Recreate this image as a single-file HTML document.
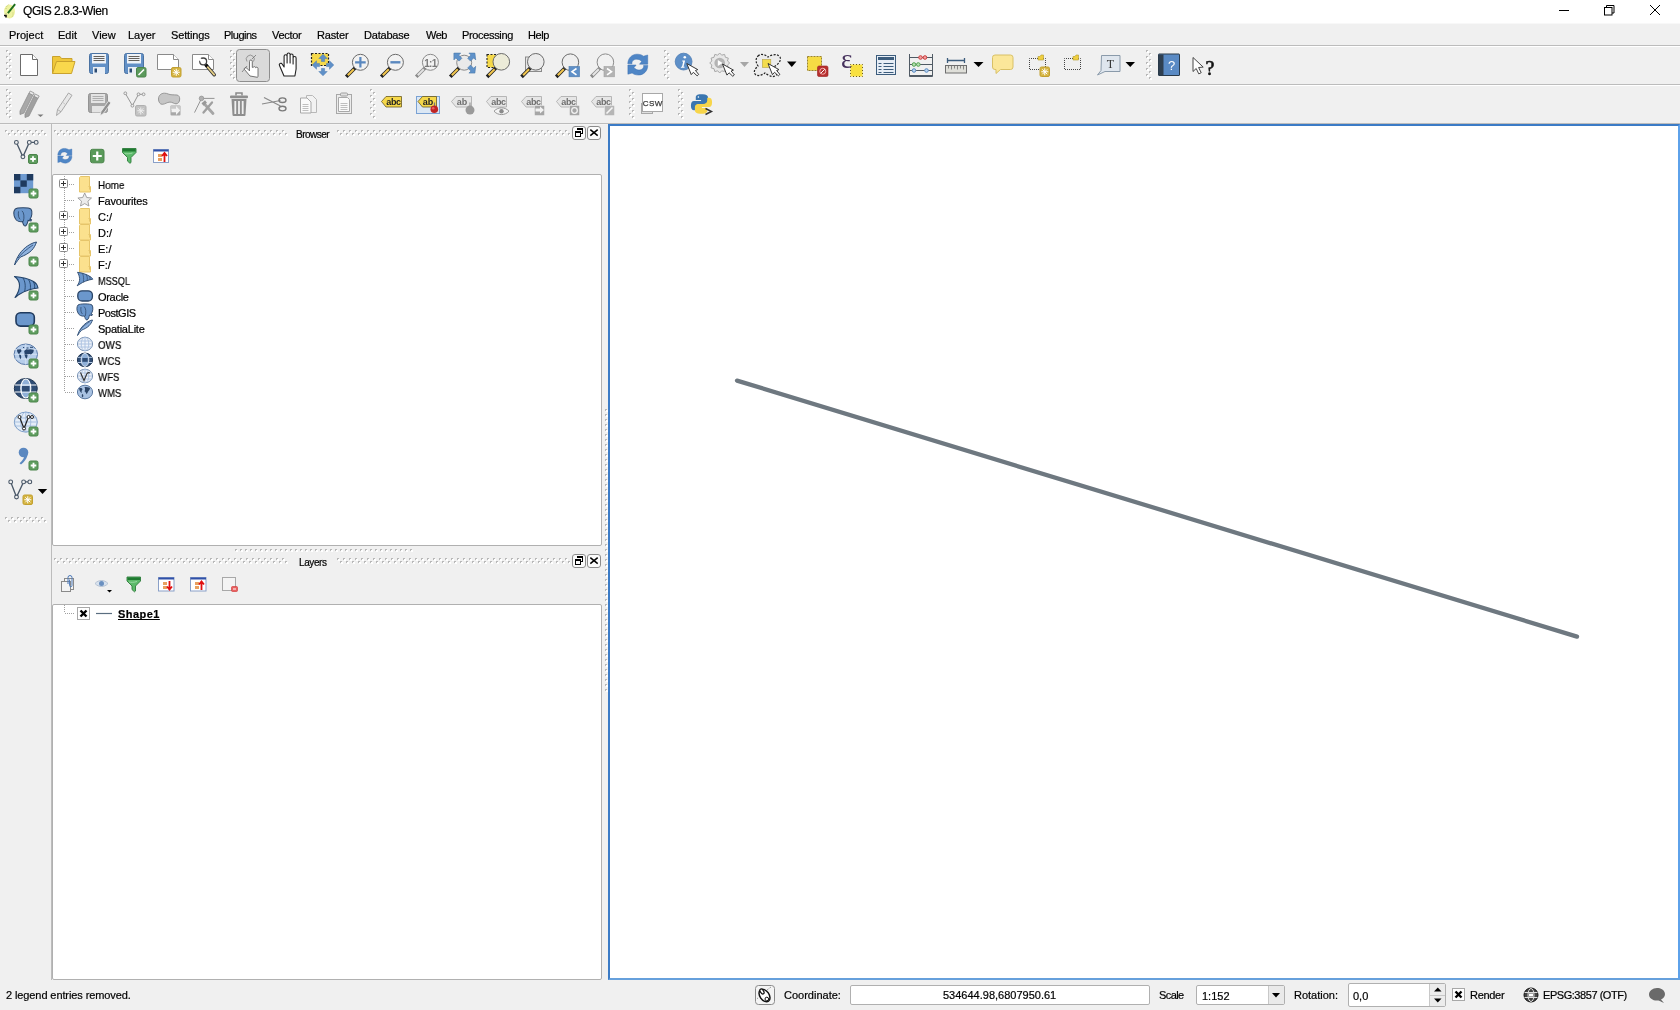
<!DOCTYPE html>
<html><head><meta charset="utf-8">
<style>
*{margin:0;padding:0;box-sizing:border-box}
html,body{width:1680px;height:1010px;overflow:hidden;background:#f0f0f0;font-family:"Liberation Sans",sans-serif;font-size:11px;color:#000}
.a{position:absolute}
.t{position:absolute;white-space:nowrap;line-height:13px;will-change:transform;-webkit-text-stroke:0.2px #000}
svg.a{overflow:visible}
#title{left:0;top:0;width:1680px;height:24px;background:#fff;border-bottom:1px solid #f8f8f8}
.hl{position:absolute;left:0;width:1680px;height:2px;border-top:1px solid #bcbcbc;background:#fff}
.frame{position:absolute;background:#fff;border:1px solid #b0b0b0;border-radius:2px}
.dbtn{position:absolute;width:14px;height:14px;border:1px solid #8a8a8a;border-radius:3px;background:#f4f4f4}
</style></head><body>
<svg width="0" height="0" style="position:absolute"><defs><pattern id="gp" width="6" height="6" patternUnits="userSpaceOnUse"><rect x="1" y="1" width="2" height="2" fill="#fff"/><rect x="0" y="0" width="2" height="1" fill="#b8b8b8"/><rect x="0" y="1" width="1" height="1" fill="#b8b8b8"/><rect x="4" y="4" width="2" height="2" fill="#fff"/><rect x="3" y="3" width="2" height="1" fill="#b8b8b8"/><rect x="3" y="4" width="1" height="1" fill="#b8b8b8"/></pattern><pattern id="gp5" width="5" height="5" patternUnits="userSpaceOnUse"><rect x="1" y="1" width="2" height="2" fill="#fff"/><rect x="0" y="0" width="2" height="1" fill="#b8b8b8"/><rect x="0" y="1" width="1" height="1" fill="#b8b8b8"/></pattern></defs></svg>
<!-- title bar -->
<div id="title" class="a"></div>
<div class="t" style="left:23px;top:4px;font-size:12px;line-height:15px;letter-spacing:-0.45px">QGIS 2.8.3-Wien</div>
<svg class="a" style="left:0;top:0" width="1680" height="23">
<ellipse cx="9.5" cy="11.5" rx="5.5" ry="7" fill="#eef2a0"/>
<path d="M6 9c0-2 1.5-4 3-4.5M6 13c0 1 .5 2 1 2.5M13 12.5v2.5l-1 2" stroke="#b8c070" stroke-width="0.8" fill="none" stroke-dasharray="1 1"/>
<path d="M8.5 12.3L14.5 5" stroke="#1d6e1d" stroke-width="2" stroke-linecap="square"/>
<path d="M4 15.5h2v2" fill="none" stroke="#111" stroke-width="1.6"/>
<path d="M1559 10.5h10" stroke="#000" stroke-width="1"/>
<rect x="1604.5" y="7.5" width="7.5" height="7.5" fill="none" stroke="#000" stroke-width="1"/>
<path d="M1606.5 7.5v-2h7.5v7.5h-2" fill="none" stroke="#000" stroke-width="1"/>
<path d="M1650 5l10 10M1660 5l-10 10" stroke="#000" stroke-width="1"/>
</svg>
<!-- menu -->
<div class="t" style="left:9px;top:29px">Project</div>
<div class="t" style="left:58px;top:29px">Edit</div>
<div class="t" style="left:92px;top:29px">View</div>
<div class="t" style="left:128px;top:29px">Layer</div>
<div class="t" style="left:171px;top:29px;letter-spacing:-0.15px">Settings</div>
<div class="t" style="left:224px;top:29px;letter-spacing:-0.5px">Plugins</div>
<div class="t" style="left:272px;top:29px;letter-spacing:-0.28px">Vector</div>
<div class="t" style="left:317px;top:29px;letter-spacing:-0.17px">Raster</div>
<div class="t" style="left:364px;top:29px;letter-spacing:-0.2px">Database</div>
<div class="t" style="left:426px;top:29px;letter-spacing:-0.5px">Web</div>
<div class="t" style="left:462px;top:29px;letter-spacing:-0.35px">Processing</div>
<div class="t" style="left:528px;top:29px;letter-spacing:-0.42px">Help</div>
<div class="hl" style="top:45px"></div>
<div class="hl" style="top:84px"></div>
<div class="hl" style="top:123px;background:#f4f4f4"></div>
<!-- grips -->
<svg class="a" style="left:6px;top:50px" width="6" height="30"><rect width="6" height="30" fill="url(#gp)"/></svg>
<svg class="a" style="left:6px;top:89px" width="6" height="30"><rect width="6" height="30" fill="url(#gp)"/></svg>
<!-- TOOLBAR ROW 1 -->
<svg class="a" style="left:0;top:0" width="1680" height="125">
<defs>
<g id="plusb"><rect x="0.5" y="0.5" width="9" height="9" rx="1.5" fill="#5f9d5f" stroke="#4b844b"/><path d="M5 2.2v5.6M2.2 5h5.6" stroke="#fff" stroke-width="1.8"/></g>
<g id="starb"><rect x="0.5" y="0.5" width="9.5" height="9.5" rx="1.5" fill="#d5b440" stroke="#c2a030"/><path d="M5.25 1.8v7M1.8 5.25h7M2.8 2.8l5 5M7.8 2.8l-5 5" stroke="#fff" stroke-width="1"/></g>
<g id="cursor"><path d="M0 0L4.45 11.1L6.55 8.8L10.35 12.3L11.85 10.9L8.65 7L10.95 6.1Z" fill="#fff" stroke="#222" stroke-width="0.9" stroke-linejoin="round"/></g>
</defs>
<!-- new -->
<path d="M20.5 54.5h12l5 5v16h-17z" fill="#fff" stroke="#6b6b6b"/>
<path d="M32.5 54.5v5h5" fill="#fff" stroke="#6b6b6b"/>
<!-- open -->
<path d="M52.5 73.5V56.5H60l1.5 2H72v3" fill="#efc73a" stroke="#c9a22e"/>
<path d="M52.5 73.5L56.5 61.5H75L71.5 73.5z" fill="#f9d84c" stroke="#c9a22e"/>
<!-- save -->
<rect x="89.5" y="53.5" width="19" height="20" rx="2" fill="#6290c6" stroke="#4a72a2"/>
<rect x="92" y="54" width="14" height="9.5" fill="#eef2f7"/>
<path d="M93.5 56.5h11M93.5 58.5h11M93.5 60.5h11" stroke="#55504a" stroke-width="0.9"/>
<rect x="93" y="67" width="12" height="7" fill="#e9eef4"/>
<rect x="94.5" y="68.5" width="2.5" height="4" fill="#2d4b72"/>
<!-- save as -->
<rect x="124.5" y="53.5" width="19" height="20" rx="2" fill="#6290c6" stroke="#4a72a2"/>
<rect x="127" y="54" width="14" height="9.5" fill="#eef2f7"/>
<path d="M128.5 56.5h11M128.5 58.5h11M128.5 60.5h11" stroke="#55504a" stroke-width="0.9"/>
<rect x="128" y="67" width="12" height="7" fill="#e9eef4"/>
<rect x="129.5" y="68.5" width="2.5" height="4" fill="#2d4b72"/>
<rect x="136.5" y="67.5" width="9.5" height="9.5" rx="1.5" fill="#5c9a5c" stroke="#4a844a"/>
<path d="M138.5 75l5.5-5.5" stroke="#fff" stroke-width="1.6"/>
<!-- new composer -->
<path d="M157.5 54.5h16l5 5v10h-21z" fill="#fff" stroke="#8a8a8a"/>
<path d="M173.5 54.5v5h5" fill="#fff" stroke="#8a8a8a"/>
<use href="#starb" x="171" y="67"/>
<!-- composer manager -->
<path d="M192.5 54.5h16l5 5v10h-21z" fill="#fff" stroke="#8a8a8a"/>
<path d="M208.5 54.5v5h5" fill="#fff" stroke="#8a8a8a"/>
<path d="M206.3 65.3l8 9.5" stroke="#333" stroke-width="3.4" stroke-linecap="round"/>
<path d="M207.6 67l6.6 7.6" stroke="#e6cf85" stroke-width="1.8" stroke-linecap="round"/>
<path d="M205.5 64.5l1.8 2" stroke="#111" stroke-width="3"/>
<circle cx="203.2" cy="61.4" r="3.4" fill="#fff" stroke="#444" stroke-width="1.3"/>
<path d="M199.2 58.8l3.6 2.8" stroke="#fff" stroke-width="2.6"/>
<circle cx="203.2" cy="61.4" r="1" fill="#fff"/>
<!-- grip -->
<g transform="translate(230,50)"><rect width="6" height="30" fill="url(#gp)"/></g>
<!-- active touch button -->
<rect x="236.5" y="49.5" width="33" height="32" rx="3" fill="#dadada" stroke="#8e8e8e"/>
<path d="M250 76l-5.5-6.5a1.3 1.3 0 0 1 2-1.6l3 3v-9.5a1.4 1.4 0 0 1 2.8 0v6l1-0.1a1.3 1.3 0 0 1 2.4 0.4a1.3 1.3 0 0 1 2.3 0.6v7.7c0 0.5-0.2 1-0.5 1.3z" fill="#fff" stroke="#555" stroke-width="0.8"/>
<path d="M247 61.5a4 4 0 1 1 6.5 0" fill="none" stroke="#666" stroke-width="0.6"/>
<path d="M256 55l-4 4M247 66l-5 6" stroke="#666" stroke-width="0.7"/>
<!-- pan hand -->
<path d="M284 76l-4.5-10.5a1.5 1.5 0 0 1 2.6-1.5l2 3V56.2a1.5 1.5 0 0 1 3 0V63V54.5a1.5 1.5 0 0 1 3 0V63V55.5a1.5 1.5 0 0 1 3 0V64V58a1.5 1.5 0 0 1 3 0v11l-1.2 7z" fill="#fff" stroke="#222" stroke-width="1.1" stroke-linejoin="round"/>
<!-- pan to selection -->
<rect x="311.5" y="53.5" width="17" height="12" fill="#f5d94a" stroke="#222" stroke-width="1.2" stroke-dasharray="2 1.5"/>
<g fill="#5f90c8" stroke="#4a7ab0" stroke-width="0.5">
<path d="M323 54.2l-4.2 4.3h2.6v3h3.2v-3h2.6z"/>
<path d="M323 75.8l-4.2-4.3h2.6v-3h3.2v3h2.6z"/>
<path d="M312.2 65l4.3-4.2v2.6h3v3.2h-3v2.6z"/>
<path d="M333.8 65l-4.3-4.2v2.6h-3v3.2h3v2.6z"/>
</g>
<!-- zoom in -->
<g>
<path d="M354.5 68.5l-7 7" stroke="#222" stroke-width="3.6" stroke-linecap="square"/>
<path d="M353.8 69.2l-6 6" stroke="#f2c64e" stroke-width="2"/>
<circle cx="360.4" cy="62.3" r="8" fill="#f2f2f2" stroke="#6a6a6a" stroke-width="1"/>
<path d="M360.4 57v10.6M355.1 62.3h10.6" stroke="#5a88bf" stroke-width="2.2"/>
</g>
<!-- zoom out -->
<path d="M389.5 68.5l-7 7" stroke="#222" stroke-width="3.6" stroke-linecap="square"/>
<path d="M388.8 69.2l-6 6" stroke="#f2c64e" stroke-width="2"/>
<circle cx="395.4" cy="62.3" r="8" fill="#f2f2f2" stroke="#6a6a6a" stroke-width="1"/>
<path d="M390.4 62.3h10" stroke="#5a88bf" stroke-width="2.4"/>
<!-- zoom 1:1 -->
<path d="M424.5 68.5l-7 7" stroke="#8a8a8a" stroke-width="3.6" stroke-linecap="square"/>
<path d="M423.8 69.2l-6 6" stroke="#e2e2e2" stroke-width="2"/>
<circle cx="430.4" cy="62.3" r="8" fill="#f2f2f2" stroke="#8a8a8a" stroke-width="1"/>
<text x="430.4" y="66.5" font-family="Liberation Sans" font-weight="bold" font-size="10" fill="#7a7a7a" text-anchor="middle" letter-spacing="-0.8">1:1</text>
<!-- zoom full -->
<path d="M458.5 68.5l-7 7" stroke="#222" stroke-width="3.6" stroke-linecap="square"/>
<path d="M457.8 69.2l-6 6" stroke="#f2c64e" stroke-width="2"/>
<circle cx="464.2" cy="62.7" r="7.5" fill="#eaeaea" stroke="#8a8a8a" stroke-width="1"/>
<path d="M454.7 53.1h6l-2 2l3.2 3.2l-2.8 2.8l-3.2-3.2l-2 2v-6.8z" fill="#5f92ca" stroke="#4a78aa" stroke-width="0.6"/>
<path d="M474.9 53.1h-6l2 2l-3.2 3.2l2.8 2.8l3.2-3.2l2 2z" fill="#5f92ca" stroke="#4a78aa" stroke-width="0.6"/>
<path d="M474.9 73.1h-6l2-2l-3.2-3.2l2.8-2.8l3.2 3.2l2-2z" fill="#5f92ca" stroke="#4a78aa" stroke-width="0.6"/>
<!-- zoom to selection -->
<rect x="487" y="54.5" width="9" height="13" fill="#f5d94a" stroke="#222" stroke-width="1.1" stroke-dasharray="2 1.5"/>
<path d="M495.3 68.6l-7 7" stroke="#222" stroke-width="3.6" stroke-linecap="square"/>
<path d="M494.6 69.3l-6 6" stroke="#f2c64e" stroke-width="2"/>
<circle cx="501.3" cy="61.8" r="8.3" fill="#ecebd8" stroke="#6a6a6a" stroke-width="1"/>
<!-- zoom to layer -->
<rect x="525.5" y="57" width="16" height="14.5" fill="#e6e6e6" stroke="#8a8a8a"/>
<path d="M529.8 68.6l-7 7" stroke="#222" stroke-width="3.6" stroke-linecap="square"/>
<path d="M529.1 69.3l-6 6" stroke="#f2c64e" stroke-width="2"/>
<circle cx="535.8" cy="61.8" r="8.3" fill="#ebebeb" stroke="#6a6a6a" stroke-width="1"/>
<!-- zoom last -->
<path d="M564.5 68.6l-7 7" stroke="#222" stroke-width="3.6" stroke-linecap="square"/>
<path d="M563.8 69.3l-6 6" stroke="#f2c64e" stroke-width="2"/>
<circle cx="570.4" cy="62.2" r="8.3" fill="#efefef" stroke="#6a6a6a" stroke-width="1"/>
<rect x="569" y="66.5" width="10.5" height="10.3" fill="#5f90c8" stroke="#4a78aa" stroke-width="0.6"/>
<path d="M576.5 68.5l-4.5 3.2l4.5 3.2" fill="none" stroke="#fff" stroke-width="1.6"/>
<!-- zoom next -->
<path d="M599.5 68.6l-7 7" stroke="#8a8a8a" stroke-width="3.6" stroke-linecap="square"/>
<path d="M598.8 69.3l-6 6" stroke="#e6e6e6" stroke-width="2"/>
<circle cx="605.4" cy="62.2" r="8.3" fill="#f1f1f1" stroke="#8a8a8a" stroke-width="1"/>
<rect x="604" y="66.5" width="10.5" height="10.3" fill="#b3b3b3" stroke="#a0a0a0" stroke-width="0.6"/>
<path d="M607 68.5l4.5 3.2l-4.5 3.2" fill="none" stroke="#fff" stroke-width="1.6"/>
<!-- refresh -->
<g id="refr"><path id="rfa" d="M627.8 63.8C628 58 632 54.2 637 54.2C640 54.2 642 55 643.5 56.2L647.7 55V64.2H639.5L641.6 61.6C640.4 60 638.8 59.2 636.8 59.2C633.6 59.2 631.5 61.2 632 63.8Z" fill="#4f86c6" stroke="#3a6eb0" stroke-width="0.5"/>
<use href="#rfa" transform="rotate(180 637.8 64.6)"/></g>
<!-- grip -->
<g transform="translate(664,50)"><rect width="6" height="30" fill="url(#gp)"/></g>
<!-- identify -->
<circle cx="683.6" cy="61.6" r="8.4" fill="#5d8fc8" stroke="#4a7ab2" stroke-width="0.8"/>
<circle cx="684.8" cy="57.3" r="1.3" fill="#fff"/>
<path d="M682.3 60.5h2.8l-1.6 6.3h1.2l-0.3 1h-3.6l0.3-1h0.9l1.2-5.3h-1.1z" fill="#fff"/>
<use href="#cursor" x="686.8" y="63.5"/>
<!-- actions gear -->
<g fill="none" stroke="#a8a8a8" stroke-width="1">
<path d="M719.7 53l2 2.2l2.9-0.8l0.8 2.9l2.9 0.8l-0.8 2.9l2.2 2l-2.2 2l0.8 2.9l-2.9 0.8l-0.8 2.9l-2.9-0.8l-2 2.2l-2-2.2l-2.9 0.8l-0.8-2.9l-2.9-0.8l0.8-2.9l-2.2-2l2.2-2l-0.8-2.9l2.9-0.8l0.8-2.9l2.9 0.8z" fill="#e8e8e8"/>
</g>
<circle cx="719.7" cy="63" r="5.3" fill="#b4b4b4"/>
<path d="M717.8 60v6l4.8-3z" fill="#fff"/>
<use href="#cursor" x="722.5" y="64"/>
<path d="M740 62h9l-4.5 5z" fill="#a6a6a6"/>
<!-- select -->
<path d="M758 56c3-3 8-1 10 1c3-2 9-4 12 0c2 4-3 8-6 10c3 3 5 7 1 9c-4 2-8-2-10-3c-3 2-8 4-10 1c-2-3 1-6 3-8c-2-3-3-7 0-10z" fill="#ececec" stroke="#222" stroke-width="1.2" stroke-dasharray="2 1.4"/>
<rect x="762.3" y="59.5" width="8.5" height="8" fill="#f3dc4c" stroke="#b4a24a" stroke-width="0.6"/>
<use href="#cursor" x="768" y="63.5"/>
<path d="M787 61.5h9.5l-4.75 5.5z" fill="#000"/>
<!-- deselect -->
<rect x="807.5" y="56.5" width="14" height="14" fill="#f6dc44" stroke="#9a8430" stroke-width="1" stroke-dasharray="2 1"/>
<rect x="817.5" y="66" width="10.5" height="10.5" rx="1.5" fill="#b73030" stroke="#9a2020" stroke-width="0.6"/>
<circle cx="822.75" cy="71.25" r="3" fill="none" stroke="#f1b0b0" stroke-width="1"/>
<path d="M820.8 73.2l4-4" stroke="#fff" stroke-width="1"/>
<!-- field calc -->
<rect x="850.5" y="64.5" width="12" height="12" fill="#f8e040" stroke="#6a5a20" stroke-width="1" stroke-dasharray="1 2" stroke-dashoffset="0.5"/>
<text x="841" y="68.3" font-family="Liberation Serif" font-size="27" fill="#45305c">&#x3B5;</text>
<!-- attribute table -->
<rect x="876.5" y="55.5" width="19" height="19" fill="#e7eef6" stroke="#3c5c7c"/>
<rect x="878" y="57" width="16" height="3" fill="#3c5c7c"/>
<path d="M878.5 63.5h3M883.5 63.5h10M878.5 66.5h3M883.5 66.5h10M878.5 69.5h3M883.5 69.5h10M878.5 72.5h3M883.5 72.5h10" stroke="#3c5c7c" stroke-width="1"/>
<!-- statistics -->
<path d="M909.5 54v22M932.5 54v22M909.5 57.5h23M909.5 64.5h23M909.5 70.5h23" stroke="#505a64" stroke-width="1"/>
<rect x="909" y="75" width="24" height="2" rx="1" fill="#505a64"/>
<circle cx="920.5" cy="57.5" r="1.8" fill="#f2a0a0" stroke="#cc3a3a"/><circle cx="925" cy="57.5" r="1.8" fill="#f2a0a0" stroke="#cc3a3a"/>
<circle cx="914" cy="64.5" r="1.8" fill="#b6e2b0" stroke="#52a050"/><circle cx="918.3" cy="64.5" r="1.8" fill="#b6e2b0" stroke="#52a050"/>
<circle cx="914" cy="70.5" r="1.8" fill="#b6d2ee" stroke="#5a8ac0"/><circle cx="926.5" cy="70.5" r="1.8" fill="#b6d2ee" stroke="#5a8ac0"/>
<!-- measure -->
<path d="M947.5 60.5h17M947.5 58v5M964.5 58v5" stroke="#3c5c7c" stroke-width="1.3"/>
<rect x="945.5" y="65.5" width="21" height="7.5" fill="#dfdfd9" stroke="#6e6e6e"/>
<path d="M948.5 66v2.5M951.5 66v3.5M954.5 66v2.5M957.5 66v3.5M960.5 66v2.5M963.5 66v3.5" stroke="#6e6e6e" stroke-width="0.8"/>
<path d="M973.5 62h10l-5 5z" fill="#000"/>
<!-- map tips -->
<path d="M995 55h15.5a2.5 2.5 0 0 1 2.5 2.5v9.5a2.5 2.5 0 0 1-2.5 2.5h-10l-4.5 4v-4h-1a2.5 2.5 0 0 1-2.5-2.5v-9.5a2.5 2.5 0 0 1 2.5-2.5z" fill="#fbe79a" stroke="#d8c066"/>
<!-- new bookmark -->
<rect x="1029.5" y="58.5" width="16" height="11" fill="none" stroke="#444" stroke-dasharray="1 1" stroke-dashoffset="0.5"/>
<path d="M1038 60v-3.5h2l1-1.5h2.5v5z" fill="#f0cf40" stroke="#b49a2a" stroke-width="0.6"/>
<use href="#starb" x="1039.5" y="66.5"/>
<!-- show bookmarks -->
<rect x="1064.5" y="58.5" width="16" height="11" fill="none" stroke="#444" stroke-dasharray="1 1" stroke-dashoffset="0.5"/>
<path d="M1073 60v-3.5h2l1-1.5h2.5v5z" fill="#f0cf40" stroke="#b49a2a" stroke-width="0.6"/>
<!-- text annotation -->
<path d="M1101.5 55.5h18.5v16h-15l-7.5 3.5l3.5-4.5z" fill="#dfe6ee" stroke="#8a9aaa"/>
<text x="1110.5" y="68" font-family="Liberation Serif" font-size="12" fill="#333" text-anchor="middle">T</text>
<path d="M1125.5 62h9.5l-4.75 5z" fill="#000"/>
<!-- grip -->
<g transform="translate(1146,50)"><rect width="6" height="30" fill="url(#gp)"/></g>
<!-- help -->
<rect x="1158.5" y="54" width="21" height="21.5" rx="0.5" fill="#5a8ac4" stroke="#2a3a4a"/>
<rect x="1159" y="54.5" width="4.5" height="20.5" fill="#2f3f50"/>
<text x="1171.5" y="70" font-family="Liberation Sans" font-size="13" fill="#fff" text-anchor="middle">?</text>
<!-- what's this -->
<path d="M1193 57.5l0 14l3.2-3l2.6 5.4l2.4-1.2l-2.6-5.2l4.6-0.4z" fill="#fff" stroke="#333" stroke-width="0.9" stroke-linejoin="round"/>
<text x="1210" y="75" font-family="Liberation Serif" font-size="20" fill="#111" stroke="#111" stroke-width="0.6" text-anchor="middle">?</text>
</svg>

<!-- TOOLBAR ROW 2 -->
<svg class="a" style="left:0;top:0" width="1680" height="125">
<defs>
<g id="tagg"><path d="M0.5 5.5l4.5-5h15v10h-15z" fill="#e4e4e4" stroke="#a8a8a8"/></g>
<g id="grayb"><rect x="0.5" y="0.5" width="10" height="10" rx="1.5" fill="#b0b0b0" stroke="#9e9e9e"/></g>
</defs>
<!-- toggle editing -->
<g stroke="#8e8e8e" stroke-width="0.8" stroke-linejoin="round">
<path d="M20 111l9-18l4 2l-9 18l-4 1.5z" fill="#a8a8a8"/>
<path d="M25 114l9-18l4 2l-9 18l-4 1.5z" fill="#a0a0a0"/>
<path d="M29 93.3l1.2-2.3l4 2l-1.2 2.3zM34 96.3l1.2-2.3l4 2l-1.2 2.3z" fill="#e8e8e8"/>
</g>
<path d="M37.5 114.5h6l-3 2.5z" fill="#7a7a7a"/>
<!-- pencil -->
<path d="M56.5 115.5l1-6l11-16.5l3.5 2.3l-11 16.5z" fill="#e8e8e8" stroke="#a0a0a0" stroke-width="0.9" stroke-linejoin="round"/>
<path d="M57.5 109.5l3.5 2.3" stroke="#a0a0a0" stroke-width="0.8"/>
<path d="M62 102l3 2" stroke="#c0c0c0" stroke-width="0.8"/>
<!-- save edits -->
<rect x="88.5" y="93.5" width="19" height="19" rx="2" fill="#a6a6a6" stroke="#939393"/>
<rect x="91" y="94" width="14" height="9" fill="#e4e4e4"/>
<path d="M92.5 96.5h11M92.5 98.5h11M92.5 100.5h11" stroke="#a0a0a0" stroke-width="0.8"/>
<rect x="92" y="106" width="12" height="6.5" fill="#e4e4e4"/>
<path d="M100 116l1-4.5l7.5-10.5l2.5 1.8l-7.5 10.5z" fill="#909090" stroke="#f0f0f0" stroke-width="0.8"/>
<!-- add feature -->
<path d="M125.3 93.3L132.4 105.7L138.5 94.3H143.6" fill="none" stroke="#8a8a8a" stroke-width="0.9"/>
<circle cx="125.3" cy="93.3" r="1.4" fill="#f0f0f0" stroke="#8a8a8a" stroke-width="0.8"/>
<circle cx="132.4" cy="105.7" r="1.4" fill="#f0f0f0" stroke="#8a8a8a" stroke-width="0.8"/>
<circle cx="138.5" cy="94.3" r="1.4" fill="#f0f0f0" stroke="#8a8a8a" stroke-width="0.8"/>
<circle cx="143.6" cy="94.3" r="1.4" fill="#f0f0f0" stroke="#8a8a8a" stroke-width="0.8"/>
<rect x="135.5" y="105.5" width="10.5" height="10.5" rx="1.5" fill="#c2c2c2" stroke="#b0b0b0"/>
<path d="M140.75 107.5v7M137.25 110.75h7M138.3 108.3l5 5M143.3 108.3l-5 5" stroke="#eee" stroke-width="1"/>
<!-- move feature -->
<path d="M158.5 99C158.5 95.5 161 93.2 164.5 93.2C167.5 93.2 169 94.8 172 94.8C174 94.8 175 95 177 95C179 95.5 179.7 97 179.7 99C179.7 102 178 103.8 176 103.8C174 103.8 172.5 102.1 170 102.1C167 102.1 165 104.3 162.2 104.3C160 104.3 158.5 102 158.5 99Z" fill="#c6c6c6" stroke="#8e8e8e" stroke-width="0.9"/>
<rect x="170.5" y="105.5" width="10" height="10" rx="1" fill="#a8a8a8"/>
<rect x="170.5" y="105.5" width="10" height="4.5" rx="1" fill="#cacaca"/>
<path d="M171.5 108.8h4.5v-2.8l4.2 4.5l-4.2 4.5v-2.8h-4.5z" fill="#f2f2f2"/>
<!-- node tool -->
<path d="M201.5 98.4H214.5M201.5 98.4L194.5 112.6" stroke="#8a8a8a" stroke-width="0.9"/>
<circle cx="201.5" cy="98.4" r="2.3" fill="#b0b0b0" stroke="#909090" stroke-width="0.7"/>
<path d="M204 103.5l9 10" stroke="#a6a6a6" stroke-width="2.8" stroke-linecap="round"/>
<path d="M212 102.5l-8.5 10" stroke="#a0a0a0" stroke-width="2.3" stroke-linecap="round"/>
<path d="M202.5 104.5l3.5-3" stroke="#999" stroke-width="3"/>
<!-- delete -->
<path d="M236 95.5v-2.5h6v2.5" fill="none" stroke="#888" stroke-width="1.5"/>
<rect x="230" y="95.5" width="18" height="2.8" rx="1" fill="#8e8e8e"/>
<path d="M231.5 99h15l-1 16a1 1 0 0 1-1 1h-11a1 1 0 0 1-1-1z" fill="#8e8e8e"/>
<path d="M235.3 101v13M239 101v13M242.7 101v13" stroke="#f0f0f0" stroke-width="1.8"/>
<!-- cut -->
<path d="M262 104l18.5-3.5M264 97.5l16.5 8.5" stroke="#8a8a8a" stroke-width="1.2"/>
<ellipse cx="282.5" cy="100.2" rx="3.5" ry="2.3" fill="none" stroke="#7a7a7a" stroke-width="1.4"/>
<ellipse cx="282.5" cy="108.6" rx="3.5" ry="2.3" fill="none" stroke="#7a7a7a" stroke-width="1.4"/>
<!-- copy -->
<path d="M306.5 95.5h6l4 4v13h-10z" fill="#f2f2f2" stroke="#b8b8b8"/>
<path d="M300.5 98h6.5l4 4v11h-10.5z" fill="#fafafa" stroke="#a8a8a8"/>
<path d="M302.5 104.5h6M302.5 106.5h6M302.5 108.5h6M302.5 110.5h6" stroke="#b0b0b0" stroke-width="0.8"/>
<!-- paste -->
<rect x="336.5" y="94.5" width="15" height="19" fill="#ececec" stroke="#a8a8a8"/>
<rect x="340.5" y="93" width="7" height="3" rx="1" fill="#e0e0e0" stroke="#a0a0a0"/>
<path d="M338.5 97.5h9l2 2v12h-11z" fill="#fafafa" stroke="#a8a8a8"/>
<path d="M340.5 103.5h7M340.5 105.5h7M340.5 107.5h7M340.5 109.5h7" stroke="#b0b0b0" stroke-width="0.8"/>
<!-- grip -->
<g transform="translate(370,89)"><rect width="6" height="30" fill="url(#gp)"/></g>
<!-- label abc -->
<path d="M381.5 101.5l4.5-5h15.5v10.5h-15.5z" fill="#f6d84a" stroke="#6a5a20" stroke-width="0.8"/>
<text x="393.5" y="105.3" font-family="Liberation Sans" font-weight="bold" font-size="9" fill="#222" text-anchor="middle" letter-spacing="-0.3">abc</text>
<!-- pin labels (active) -->
<rect x="416.5" y="96.5" width="23" height="17" fill="#dbe7f4" stroke="#7aa2d4"/>
<path d="M418 101.5l4.5-5h14v10.5h-14z" fill="#f6d84a" stroke="#6a5a20" stroke-width="0.8"/>
<text x="428" y="105.3" font-family="Liberation Sans" font-weight="bold" font-size="9" fill="#222" text-anchor="middle">ab</text>
<path d="M434.5 106v-3.5" stroke="#777" stroke-width="1.2"/>
<circle cx="434.3" cy="109.3" r="3.8" fill="#c02424"/>
<circle cx="433.2" cy="108.2" r="1.3" fill="#e86060"/>
<!-- ab pin gray -->
<path d="M451.5 101.5l4.5-5h15.5v10.5h-15.5z" fill="#e6e6e6" stroke="#a8a8a8" stroke-width="0.8"/>
<text x="462" y="105.3" font-family="Liberation Sans" font-weight="bold" font-size="9" fill="#6e6e6e" text-anchor="middle">ab</text>
<path d="M470 106v-3.5" stroke="#999" stroke-width="1.2"/>
<circle cx="470" cy="110.1" r="4.5" fill="#9a9a9a"/>
<!-- abc eye -->
<path d="M486.5 101.5l4.5-5h15.5v10.5h-15.5z" fill="#e6e6e6" stroke="#a8a8a8" stroke-width="0.8"/>
<text x="498.5" y="105.3" font-family="Liberation Sans" font-weight="bold" font-size="9" fill="#6e6e6e" text-anchor="middle" letter-spacing="-0.3">abc</text>
<path d="M494 111.2c4-4.5 11-4.5 15 0c-4 4.5-11 4.5-15 0z" fill="#f4f4f4" stroke="#8a8a8a" stroke-width="0.9"/>
<circle cx="501.5" cy="111.2" r="2.2" fill="#8a8a8a"/>
<!-- abc move -->
<path d="M521.5 101.5l4.5-5h15.5v10.5h-15.5z" fill="#e6e6e6" stroke="#a8a8a8" stroke-width="0.8"/>
<text x="533.5" y="105.3" font-family="Liberation Sans" font-weight="bold" font-size="9" fill="#6e6e6e" text-anchor="middle" letter-spacing="-0.3">abc</text>
<rect x="534.5" y="105.5" width="10" height="10" rx="1" fill="#a6a6a6" stroke="#f0f0f0" stroke-width="0.5"/>
<path d="M535.5 108.5h4.5v-2l4 3.5l-4 3.5v-2h-4.5z" fill="#f2f2f2"/>
<!-- abc rotate -->
<path d="M556.5 101.5l4.5-5h15.5v10.5h-15.5z" fill="#e6e6e6" stroke="#a8a8a8" stroke-width="0.8"/>
<text x="568.5" y="105.3" font-family="Liberation Sans" font-weight="bold" font-size="9" fill="#6e6e6e" text-anchor="middle" letter-spacing="-0.3">abc</text>
<rect x="569.5" y="105.5" width="10" height="10" rx="1" fill="#a6a6a6" stroke="#f0f0f0" stroke-width="0.5"/>
<circle cx="574.5" cy="110.5" r="2.8" fill="none" stroke="#f2f2f2" stroke-width="1.3"/>
<!-- abc change -->
<path d="M591.5 101.5l4.5-5h15.5v10.5h-15.5z" fill="#e6e6e6" stroke="#a8a8a8" stroke-width="0.8"/>
<text x="603.5" y="105.3" font-family="Liberation Sans" font-weight="bold" font-size="9" fill="#6e6e6e" text-anchor="middle" letter-spacing="-0.3">abc</text>
<rect x="604.5" y="105.5" width="10" height="10" rx="1" fill="#b6b6b6" stroke="#f0f0f0" stroke-width="0.5"/>
<path d="M606.5 113.5l6-6" stroke="#f6f6f6" stroke-width="1.6"/>
<!-- grip -->
<g transform="translate(629,89)"><rect width="6" height="30" fill="url(#gp)"/></g>
<!-- CSW -->
<rect x="641.5" y="103.5" width="11" height="10" fill="#e0e0e0" stroke="#a8a8a8"/>
<rect x="642.5" y="93.5" width="20" height="18" fill="#fff" stroke="#a8a8a8"/>
<text x="652.8" y="106" font-family="Liberation Sans" font-size="8" fill="#3a3a3a" text-anchor="middle" letter-spacing="0.4" stroke="#3a3a3a" stroke-width="0.25">CSW</text>
<!-- grip -->
<g transform="translate(678,89)"><rect width="6" height="30" fill="url(#gp)"/></g>
<!-- python -->
<g transform="translate(701.5 104) scale(0.88) translate(-701.5 -104)">
<path d="M701 93c-5 0-6 1.5-6 4v2.5h6v1h-8c-2.5 0-3.5 2-3.5 5.5s1.2 5 3.5 5h2v-3c0-2.5 2-4 4.5-4h6c2 0 3.5-1.5 3.5-3.5V97c0-2.5-2-4-6-4z" fill="#3a76b0"/>
<circle cx="698" cy="96" r="0.9" fill="#fff"/>
<path d="M702 115c5 0 6-1.5 6-4v-2.5h-6v-1h8c2.5 0 3.5-2 3.5-5.5s-1.2-5-3.5-5h-2v3c0 2.5-2 4-4.5 4h-6c-2 0-3.5 1.5-3.5 3.5v3.5c0 2.5 2 4 6 4z" fill="#f7d54a"/>
</g>
<path d="M705.5 108.5l6 3l-6 3" fill="none" stroke="#333" stroke-width="1.4"/>
</svg>

<!-- left toolbar / dock separator -->
<div class="a" style="left:51px;top:124px;width:1px;height:856px;background:#bcbcbc"></div>
<svg class="a" style="left:5px;top:130px" width="42" height="6"><rect width="42" height="6" fill="url(#gp)"/></svg>
<svg class="a" style="left:5px;top:517px" width="42" height="6"><rect width="42" height="6" fill="url(#gp)"/></svg>

<!-- LEFT TOOLBAR -->
<svg class="a" style="left:0;top:124px" width="51" height="410">
<g transform="translate(0,-124)">
<!-- add vector -->
<path d="M16.4 142.4L22.9 156.8L29.3 142.4H36.2" fill="none" stroke="#4a5868" stroke-width="1.3"/>
<circle cx="16.4" cy="142.4" r="1.9" fill="#f0f0f0" stroke="#4a5868" stroke-width="1.1"/>
<circle cx="22.9" cy="156.8" r="1.9" fill="#f0f0f0" stroke="#4a5868" stroke-width="1.1"/>
<circle cx="29.3" cy="142.4" r="1.9" fill="#f0f0f0" stroke="#4a5868" stroke-width="1.1"/>
<circle cx="36.2" cy="142.4" r="1.9" fill="#f0f0f0" stroke="#4a5868" stroke-width="1.1"/>
<use href="#plusb" x="28" y="154"/>
<!-- add raster -->
<rect x="14" y="174" width="19.2" height="19.2" fill="#6e9ad0"/>
<rect x="14" y="174" width="6.4" height="6.4" fill="#1f3a5e"/><rect x="26.8" y="174" width="6.4" height="6.4" fill="#1f3a5e"/>
<rect x="20.4" y="180.4" width="6.4" height="6.4" fill="#1f3a5e"/><rect x="14" y="186.8" width="6.4" height="6.4" fill="#1f3a5e"/>
<use href="#plusb" x="28.5" y="188.5"/>
<!-- postgis elephant -->
<g transform="translate(14 208) scale(1.13) translate(-77 -304)"><use href="#eleph"/><use href="#eleph2"/></g>
<use href="#plusb" x="28.5" y="222.5"/>
<!-- spatialite feather -->
<path d="M14.5 265c2-8 7-15 13-19c3-2 6-3.5 9-4c-1 3-2.5 6-5 8.5c-3 3-7 5-11 6.5c-2 2-4 5-6 8z" fill="#8fb2de" stroke="#2a4a72" stroke-width="1"/>
<path d="M18 258c4-5 9-9 15-13" fill="none" stroke="#2a4a72" stroke-width="0.8"/>
<use href="#plusb" x="28.5" y="256.5"/>
<!-- mssql -->
<path d="M14.5 276.5c7 0.5 14 2 19 5c2.5 1.5 4 4 4.5 6.5c-7 0.5-14 3.5-19 6.5c-1.5 1-2.5 2-4 3c2.5-3.5 4.5-8 4.5-12c0-3.5-1.5-6.5-5-9z" fill="#6b97cc" stroke="#24446a" stroke-width="1.1" stroke-linejoin="round"/>
<path d="M23 278c2 3 3 8 1.5 14M28.5 279.5c2 3 2.5 7 1.5 11M33.5 282c1 2 1.5 4 1 6.5" fill="none" stroke="#24446a" stroke-width="0.9"/>
<use href="#plusb" x="28.5" y="290.5"/>
<!-- oracle -->
<rect x="16" y="312.8" width="18.3" height="13.3" rx="4.5" fill="#6b97cc" stroke="#1f3a5e" stroke-width="1.6"/>
<use href="#plusb" x="28.5" y="324.5"/>
<!-- wms globe -->
<ellipse cx="25.8" cy="354.3" rx="11.7" ry="10.3" fill="#b6cdea" stroke="#5a7aa8" stroke-width="1"/>
<path d="M14.5 354.3h22.6M14.8 349.5h22M14.8 359h22M25.8 344v20.6" stroke="#dbe6f5" stroke-width="0.8"/>
<path d="M17 349.5l4-0.3l0.5 2l-1.5 1.5l-0.8 1.2l-1-0.5l-1-2z" fill="#27446c"/>
<path d="M19.3 354.5l1.5 0.5l0.5 2l-0.7 2.2l-0.8-1.2l-0.6-2z" fill="#27446c"/>
<path d="M24.2 351l2-1.8l2 0.3l2.2-0.3l3.4 0.5l-0.4 2.5l-1.5 1.5l-1 0.8l-1.2-0.6l-1.8 0.4l-1.8-0.2l-1.4 0.4z" fill="#27446c"/>
<path d="M24.5 354.6l2.5-0.3l0.6 1.5l-0.6 2.2l-0.7 0.8l-1-1.5z" fill="#27446c"/>
<path d="M23 347.5h1.2M26.5 348h2M30 347.3h3" stroke="#27446c" stroke-width="1"/>
<use href="#plusb" x="28.5" y="358.5"/>
<!-- wcs -->
<ellipse cx="25.8" cy="388.5" rx="11.5" ry="10" fill="#2f4d75" stroke="#1d3350" stroke-width="1"/>
<path d="M15 385h21.6M15 392h21.6" stroke="#fff" stroke-width="1.2"/>
<ellipse cx="25.8" cy="388.5" rx="5" ry="9.5" fill="#8fb0d8" stroke="#fff" stroke-width="1.1"/>
<path d="M20.8 385h10M20.8 392h10" stroke="#fff" stroke-width="1.2"/>
<rect x="22" y="386" width="7.5" height="5.5" fill="#2f4d75"/>
<use href="#plusb" x="28.5" y="392.5"/>
<!-- wfs -->
<ellipse cx="25.8" cy="422.1" rx="11.5" ry="10" fill="#e4edf7" stroke="#7a9cc6" stroke-width="1"/>
<path d="M14.5 418h22.6M14.5 422h22.6M14.5 426h22.6M25.8 412v20" stroke="#9ab6da" stroke-width="0.8"/>
<ellipse cx="25.8" cy="422.1" rx="5" ry="10" fill="none" stroke="#9ab6da" stroke-width="0.8"/>
<path d="M19.5 417L24 428.5L28.5 417H32" fill="none" stroke="#222" stroke-width="1.2"/>
<circle cx="19.5" cy="417" r="1.5" fill="#fff" stroke="#222" stroke-width="1"/>
<circle cx="24" cy="428.5" r="1.5" fill="#fff" stroke="#222" stroke-width="1"/>
<circle cx="28.5" cy="417" r="1.5" fill="#fff" stroke="#222" stroke-width="1"/>
<circle cx="32" cy="417" r="1.5" fill="#fff" stroke="#222" stroke-width="1"/>
<use href="#plusb" x="28.5" y="426.5"/>
<!-- delimited text comma -->
<circle cx="23.5" cy="452.5" r="4.8" fill="#5b88c0"/>
<path d="M26 450c3 3 2 9-5 14.5l-1.5-1.2c3-2.5 5.5-6 4.5-9z" fill="#5b88c0"/>
<use href="#plusb" x="28.5" y="460.5"/>
<!-- new shapefile -->
<path d="M10.7 481.9L16.5 497L23.6 481.9H29.8" fill="none" stroke="#4a5868" stroke-width="1.3"/>
<circle cx="10.7" cy="481.9" r="1.9" fill="#f0f0f0" stroke="#4a5868" stroke-width="1.1"/>
<circle cx="16.5" cy="497" r="1.9" fill="#f0f0f0" stroke="#4a5868" stroke-width="1.1"/>
<circle cx="23.6" cy="481.9" r="1.9" fill="#f0f0f0" stroke="#4a5868" stroke-width="1.1"/>
<circle cx="29.8" cy="481.9" r="1.9" fill="#f0f0f0" stroke="#4a5868" stroke-width="1.1"/>
<use href="#starb" x="22.5" y="494.5"/>
<path d="M37.8 489h9.4l-4.7 5z" fill="#000"/>
</g>
</svg>

<!-- Browser dock -->
<svg class="a" style="left:54px;top:130px" width="234" height="6"><rect width="234" height="6" fill="url(#gp)"/></svg>
<div class="t" style="left:296px;top:128px;font-size:10px;letter-spacing:-0.5px">Browser</div>
<svg class="a" style="left:337px;top:130px" width="233" height="6"><rect width="233" height="6" fill="url(#gp)"/></svg>
<div class="frame" style="left:52px;top:174px;width:550px;height:372px"></div>

<!-- splitter -->
<svg class="a" style="left:235px;top:549px" width="178" height="3"><rect width="178" height="3" fill="url(#gp5)"/></svg>

<!-- Layers dock -->
<svg class="a" style="left:54px;top:558px" width="234" height="6"><rect width="234" height="6" fill="url(#gp)"/></svg>
<div class="t" style="left:299px;top:556px;font-size:10px;letter-spacing:-0.4px">Layers</div>
<svg class="a" style="left:337px;top:558px" width="233" height="6"><rect width="233" height="6" fill="url(#gp)"/></svg>
<div class="frame" style="left:52px;top:604px;width:550px;height:376px"></div>

<!-- DOCK CONTENTS -->
<svg class="a" style="left:0;top:0" width="610" height="980">
<defs>
<g id="folder"><path d="M2.5 0.5h9v13h1v2.5H1.5V1.5z" fill="#fbe18e" stroke="#e6c56a"/><path d="M10.5 10.5h2v5" fill="none" stroke="#e6c56a"/></g>
<g id="pbox"><rect x="0.5" y="0.5" width="8" height="8" rx="1" fill="#fff" stroke="#8a8a8a"/><path d="M2 4.5h5M4.5 2v5" stroke="#333" stroke-width="1"/></g>
<g id="globe16"><ellipse cx="8" cy="8" rx="7.6" ry="6.8" fill="#eef3fa" stroke="#7890b0" stroke-width="1"/><path d="M0.8 5h14.4M0.8 8h14.4M0.8 11h14.4M8 1.2v13.6" stroke="#a8c0e0" stroke-width="0.9"/><ellipse cx="8" cy="8" rx="3.8" ry="6.8" fill="none" stroke="#a8c0e0" stroke-width="0.9"/></g>
<g id="fb"><rect x="0.5" y="0.5" width="13" height="13" rx="2.5" fill="#fbfbfb" stroke="#8c8c8c"/><path fill="#000" d="M5 2h6v2H5zM10 4h1v4h-1zM9 7h2v1H9zM3 5h6v2H3zM3 7h1v4H3zM8 7h1v4H8zM3 10h6v1H3z"/></g>
<g id="cb"><rect x="0.5" y="0.5" width="13" height="13" rx="2.5" fill="#fbfbfb" stroke="#8c8c8c"/><path d="M3.3 3.6L10.7 9.6M10.7 3.6L3.3 9.6" stroke="#000" stroke-width="1.5"/></g>
</defs>
<!-- dock buttons -->
<use href="#fb" x="572" y="126"/><use href="#cb" x="587" y="126"/>
<use href="#fb" x="572" y="554"/><use href="#cb" x="587" y="554"/>
<!-- browser toolbar -->
<use href="#refr" transform="translate(57.9 148.4) scale(0.71) translate(-628 -54.2)"/>
<rect x="90.5" y="149.3" width="13.5" height="13.5" rx="2" fill="#5a9a5a" stroke="#4b854b"/>
<path d="M97.25 151.5v9M92.75 156h9" stroke="#fff" stroke-width="2.2"/>
<g id="funnel"><path d="M122.5 148.5h13.5v4l-5 5v5l-1 0.8l-2.5-2.2v-3.6l-5-5z" fill="#5cba6a" stroke="#2c7a3a" stroke-width="0.9" stroke-linejoin="round"/>
<path d="M123 149h12.6v2.4h-12.6z" fill="#1f7a30"/>
<path d="M124.5 153.5c2 0.5 5 0.5 8-0.5" stroke="#a8e0b0" stroke-width="0.8" fill="none"/></g>
<rect x="153.5" y="149.5" width="15" height="13" fill="#fff" stroke="#8aa0c8"/>
<rect x="153.5" y="149.5" width="15" height="2" fill="#3050a8"/>
<rect x="158" y="154" width="4" height="3" fill="#e8a060"/><rect x="158" y="158" width="4" height="3" fill="#e8a060"/>
<path d="M164.5 162v-8M162 156l2.5-3l2.5 3" stroke="#e01010" stroke-width="1.8" fill="none"/>
<!-- tree lines (browser) -->
<path d="M64.5 176v216M69 184.5h5M65 200.5h9M69 216.5h5M69 232.5h5M69 248.5h5M69 264.5h5M65 280.5h9M65 296.5h9M65 312.5h9M65 328.5h9M65 344.5h9M65 360.5h9M65 376.5h9M65 392.5h9" stroke="#a0a0a0" stroke-width="1" stroke-dasharray="1 1"/>
<use href="#pbox" x="59" y="179"/><use href="#pbox" x="59" y="211"/><use href="#pbox" x="59" y="227"/><use href="#pbox" x="59" y="243"/><use href="#pbox" x="59" y="259"/>
<use href="#folder" x="78" y="176"/>
<path d="M84.7 193l2 4.5l4.8 0.5l-3.6 3.2l1 4.8l-4.2-2.4l-4.2 2.4l1-4.8l-3.6-3.2l4.8-0.5z" fill="#ececec" stroke="#9a9a9a" stroke-width="0.9" stroke-linejoin="round"/>
<use href="#folder" x="78" y="208"/><use href="#folder" x="78" y="224"/><use href="#folder" x="78" y="240"/><use href="#folder" x="78" y="256"/>
<!-- mssql 16 -->
<path d="M77.5 272.3C82 272.8 87 274.5 90 276.5C91.5 277.5 92.5 278.5 92.8 279.2C88 279.8 83 282 80 284C79 284.7 78 285.3 77.2 285.8C78.8 283.5 79.8 281 79.6 278.5C79.4 276.3 78.6 274 77.5 272.3Z" fill="#6b97cc" stroke="#2e4a6e" stroke-width="0.9" stroke-linejoin="round"/>
<path d="M82.5 273.3C83.5 275.5 84 278.5 83.3 282.3M86.3 274.5C87.3 276.5 87.6 278.8 87 281M89.5 276C90 277 90.2 278 90 279.5" fill="none" stroke="#2e4a6e" stroke-width="0.7"/>
<!-- oracle 16 -->
<rect x="77.8" y="290.8" width="14.6" height="10.2" rx="4.3" fill="#6b97cc" stroke="#2a4466" stroke-width="1.3"/>
<!-- postgis 16 -->
<path id="eleph" d="M78 305C80 303.5 90 303.5 92 305C93.5 307 93 312 91 314L92.5 314.5L92 315.5L89.5 315C89 317 88.5 319.5 87 320C85.5 320 85 318 84.5 316C82 316.5 79 315.5 78 313C76.5 310 76.5 307 78 305Z" fill="#6b97cc" stroke="#2a4466" stroke-width="0.9"/>
<path id="eleph2" d="M81 307C80.5 310 81 313 82.5 314M84 306.5C86 308 86.2 312 85.3 316" fill="none" stroke="#2a4466" stroke-width="0.7"/>
<!-- spatialite 16 -->
<path d="M77.5 335.5c1.5-5.5 5-10 9-12.8c2-1.4 4-2.4 6-2.7c-0.7 2-1.7 4-3.4 5.7c-2 2-4.8 3.4-7.5 4.4c-1.4 1.4-2.8 3.4-4.1 5.4z" fill="#8fb2de" stroke="#2a4a72" stroke-width="0.9"/>
<path d="M80 330c3-3.5 6-6 10-8.5" fill="none" stroke="#2a4a72" stroke-width="0.6"/>
<!-- ows -->
<use href="#globe16" x="77" y="336"/>
<!-- wcs -->
<ellipse cx="85" cy="359.9" rx="7.6" ry="6.8" fill="#2f4d75" stroke="#1d3350"/>
<path d="M77.8 357.3h14.4M77.8 362.5h14.4" stroke="#b8cce6" stroke-width="1"/>
<ellipse cx="85" cy="359.9" rx="3.8" ry="6.6" fill="#8fb0d8" stroke="#dfe8f4" stroke-width="0.9"/>
<rect x="82.3" y="358" width="5.4" height="3.8" fill="#2f4d75"/>
<!-- wfs -->
<use href="#globe16" x="77" y="368"/>
<path d="M80.5 372.5L84 380.5L87 373.5C88 372.5 89 372.3 90 373" fill="none" stroke="#333" stroke-width="1.1"/>
<!-- wms -->
<ellipse cx="85" cy="392" rx="7.6" ry="6.8" fill="#a9c2e2" stroke="#5a78a0"/>
<path d="M79 388.5c1.5-0.8 3.2-0.3 3.5 1c-0.8 1-1.2 2-0.6 3.5c-1.2-0.6-2.4-2-2.9-4.5zM84.5 387c2 0 4.5 0 5.5 1c0 1.5-1 2.5-2 3.8c-0.5 1-1 2-1.5 2.5c-0.3-1.5-1-2.5-2-3c0.5-1 1-2 0-4.3zM82 394c1 0 1.5 1 1.3 2.5c-0.5 0.5-1 0.8-1.3 1c-0.3-1-0.3-2.5 0-3.5z" fill="#2b4466"/>
<!-- browser texts are html -->
<!-- layers toolbar -->
<rect x="64.5" y="578.5" width="9" height="11" fill="#f4f4f4" stroke="#8a8a8a"/>
<rect x="61.5" y="581.5" width="9" height="10" fill="#f4f4f4" stroke="#8a8a8a"/>
<path d="M68 584v-6.5a2 2 0 0 1 4 0v8a1.2 1.2 0 0 1-2.4 0v-6" fill="none" stroke="#4a78b8" stroke-width="1"/>
<path d="M95 583.5c3.5-4 9.5-4 13 0c-3.5 4-9.5 4-13 0z" fill="#d8e2ee" stroke="#a8b8cc" stroke-width="0.8"/>
<circle cx="101.5" cy="583.5" r="2.5" fill="#6a90c0"/>
<path d="M107 590h5l-2.5 2.5z" fill="#000"/>
<use href="#funnel" x="4.5" y="428.5"/>
<rect x="158.5" y="577.5" width="15.5" height="13.5" fill="#fff" stroke="#8aa0c8"/>
<rect x="158.5" y="577.5" width="15.5" height="2" fill="#3050a8"/>
<rect x="163" y="582" width="4" height="3" fill="#e8a060"/><rect x="163" y="586" width="4" height="3" fill="#e8a060"/>
<path d="M169.5 581v8M167 586.5l2.5 3l2.5-3" stroke="#e01010" stroke-width="1.8" fill="none"/>
<rect x="190.5" y="577.5" width="15.5" height="13.5" fill="#fff" stroke="#8aa0c8"/>
<rect x="190.5" y="577.5" width="15.5" height="2" fill="#3050a8"/>
<rect x="195" y="582" width="4" height="3" fill="#e8a060"/><rect x="195" y="586" width="4" height="3" fill="#e8a060"/>
<path d="M201.5 590v-8M199 584.5l2.5-3l2.5 3" stroke="#e01010" stroke-width="1.8" fill="none"/>
<rect x="222.5" y="577.5" width="13" height="13" fill="#f4f4f4" stroke="#a8a8a8"/>
<rect x="231.5" y="586.5" width="6" height="5" rx="1" fill="#e86060" stroke="#d03030" stroke-width="0.6"/>
<path d="M233 589h3" stroke="#fff" stroke-width="1"/>
<!-- layer tree -->
<path d="M64.5 605v8M65 613.5h9" stroke="#a0a0a0" stroke-width="1" stroke-dasharray="1 1"/>
<rect x="77.5" y="607.5" width="12" height="12" fill="#fff" stroke="#a8a8a8"/>
<path d="M80.5 610.5l6 6M86.5 610.5l-6 6" stroke="#000" stroke-width="2.4"/>
<path d="M96 613.5h16" stroke="#5a6e80" stroke-width="1.2"/>
</svg>

<div class="t" style="left:98px;top:179px;transform:scaleX(0.901);transform-origin:0 0">Home</div>
<div class="t" style="left:98px;top:195px;letter-spacing:-0.19px">Favourites</div>
<div class="t" style="left:98px;top:211px">C:/</div>
<div class="t" style="left:98px;top:227px">D:/</div>
<div class="t" style="left:98px;top:243px">E:/</div>
<div class="t" style="left:98px;top:259px">F:/</div>
<div class="t" style="left:98px;top:275px;transform:scaleX(0.831);transform-origin:0 0">MSSQL</div>
<div class="t" style="left:98px;top:291px;letter-spacing:-0.3px">Oracle</div>
<div class="t" style="left:98px;top:307px;letter-spacing:-0.48px">PostGIS</div>
<div class="t" style="left:98px;top:323px;letter-spacing:-0.24px">SpatiaLite</div>
<div class="t" style="left:98px;top:339px;transform:scaleX(0.890);transform-origin:0 0">OWS</div>
<div class="t" style="left:98px;top:355px;transform:scaleX(0.883);transform-origin:0 0">WCS</div>
<div class="t" style="left:98px;top:371px;transform:scaleX(0.878);transform-origin:0 0">WFS</div>
<div class="t" style="left:98px;top:387px;transform:scaleX(0.866);transform-origin:0 0">WMS</div>
<div class="t" style="left:118px;top:608px;font-weight:bold;text-decoration:underline;text-decoration-skip-ink:none;letter-spacing:0.45px">Shape1</div>

<!-- vertical splitter -->
<svg class="a" style="left:605px;top:409px" width="3" height="283"><rect width="3" height="283" fill="url(#gp5)"/></svg>

<!-- Map canvas -->
<div class="a" style="left:608px;top:124px;width:1072px;height:856px;background:#fff;border:2px solid #3b7bc6;border-right-color:#5ea2ea;border-bottom-color:#66a0dc"></div>
<svg class="a" style="left:0;top:0" width="1680" height="1010"><line x1="737" y1="380.6" x2="1577" y2="636.6" stroke="#6e7880" stroke-width="4.3" stroke-linecap="round"/></svg>

<!-- status bar -->
<div class="t" style="left:6px;top:989px;letter-spacing:-0.1px">2 legend entries removed.</div>
<div class="t" style="left:784px;top:989px">Coordinate:</div>
<div class="frame" style="left:850px;top:985px;width:300px;height:20px"></div>
<div class="t" style="left:943px;top:989px">534644.98,6807950.61</div>
<div class="t" style="left:1159px;top:989px;letter-spacing:-0.6px">Scale</div>
<div class="frame" style="left:1196px;top:985px;width:89px;height:20px"></div>
<div class="t" style="left:1202px;top:990px">1:152</div>
<div class="t" style="left:1294px;top:989px">Rotation:</div>
<div class="frame" style="left:1348px;top:983px;width:98px;height:24px"></div>
<div class="t" style="left:1353px;top:990px">0,0</div>
<div class="t" style="left:1470px;top:989px;letter-spacing:-0.3px">Render</div>
<div class="t" style="left:1543px;top:989px;letter-spacing:-0.45px">EPSG:3857 (OTF)</div>
<!-- STATUS ICONS -->
<svg class="a" style="left:0;top:975px" width="1680" height="35">
<g transform="translate(0,-975)">
<rect x="755.5" y="985.5" width="19" height="19" rx="3" fill="#f4f4f4" stroke="#8a8a8a"/>
<ellipse cx="764.5" cy="995.5" rx="4.6" ry="7" transform="rotate(-35 764.5 995.5)" fill="#fff" stroke="#111" stroke-width="1.5"/>
<ellipse cx="762" cy="991.5" rx="1.6" ry="2.8" transform="rotate(-35 762 991.5)" fill="#fff" stroke="#111" stroke-width="1.2"/>
<circle cx="766.8" cy="999" r="1.8" fill="#fff" stroke="#111" stroke-width="1"/>
<path d="M767 990l4-3M758 998l-1.5 1" stroke="#555" stroke-width="0.7" stroke-dasharray="1 1"/>
<!-- scale combo button -->
<path d="M1268.5 986v18" stroke="#c8c8c8"/>
<rect x="1269" y="986" width="15" height="18" fill="#eaeaea"/>
<path d="M1272 993h8l-4 4.5z" fill="#000"/>
<!-- rotation spin -->
<path d="M1429.5 984v22" stroke="#c8c8c8"/>
<rect x="1430" y="984" width="15" height="22" fill="#ececec"/>
<path d="M1430 995.5h15" stroke="#c8c8c8"/>
<path d="M1434 991.5h7.5l-3.75-4z" fill="#000"/>
<path d="M1434 998.5h7.5l-3.75 4z" fill="#000"/>
<!-- render checkbox -->
<rect x="1452.5" y="988.5" width="12" height="12" fill="#fff" stroke="#a8a8a8"/>
<path d="M1455.5 991.5l6 6M1461.5 991.5l-6 6" stroke="#000" stroke-width="2.4"/>
<!-- epsg globe -->
<circle cx="1531" cy="995" r="7" fill="#444" stroke="#111" stroke-width="1"/>
<ellipse cx="1531" cy="995" rx="3" ry="6.5" fill="none" stroke="#ddd" stroke-width="1"/>
<path d="M1524.5 992.5h13M1524.5 997.5h13" stroke="#ddd" stroke-width="1"/>
<rect x="1529" y="993.5" width="4" height="3" fill="#fff"/>
<!-- message bubble -->
<path d="M1657 988c4.5 0 8 2.5 8 6c0 2.5-1.5 4.5-4 5.5l3 3.5l-5.5-2.5c-0.5 0-1 0.1-1.5 0.1c-4.5 0-8-2.6-8-6.1s3.5-6.5 8-6.5z" fill="#6a6a6a"/>
</g>
</svg>

</body></html>
